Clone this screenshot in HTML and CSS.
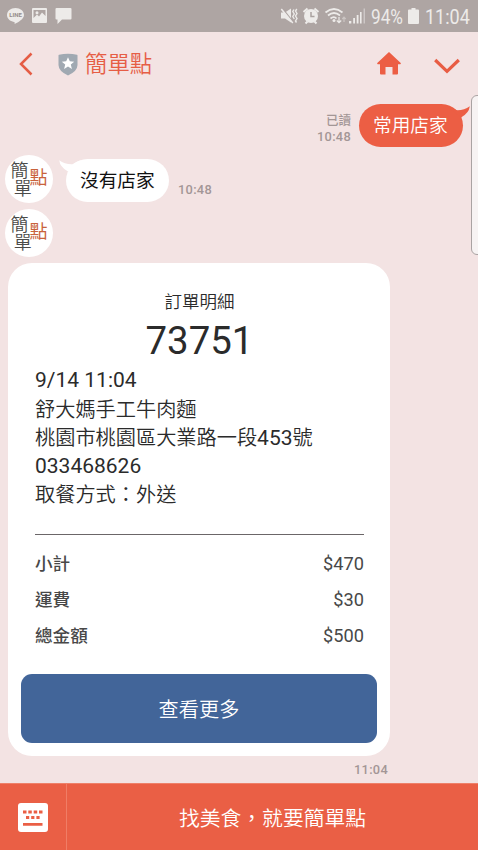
FILE: index.html
```html
<!DOCTYPE html>
<html lang="zh-Hant">
<head>
<meta charset="utf-8">
<meta name="viewport" content="width=device-width, initial-scale=1">
<title>簡單點</title>
<link rel="stylesheet" href="styles.css">
</head>
<body>
<div class="app">
  <div class="status">
    <svg class="status-left" width="80" height="32" viewBox="0 0 80 32" fill="#edebe9">
      <path d="M15.500 8C10.600 8 7 11.100 7 15.100c0 3.500 3 6.300 7 6.900 1 .2.700.9.600 2.100 3.700-1.700 9.400-5 9.400-9C24 11.100 20.400 8 15.500 8z"/>
      <text class="line-mark" x="15.600" y="17.200" text-anchor="middle" fill="#958d8b">LINE</text>
      <path fill-rule="evenodd" d="M33 8h13q1 0 1 1v13q0 1-1 1H33q-1 0-1-1V9q0-1 1-1zM33.500 10v8l3.500-3.500 2 2 3-4 1.500 1.500 2 2V10zM37 11.300a1.500 1.500 0 1 0 0 3 1.500 1.500 0 0 0 0-3z"/>
      <path d="M56.500 8h14q1 0 1 1v9.500q0 1-1 1H62L57.500 24v-4.500h-1q-1 0-1-1V9q0-1 1-1z"/>
    </svg>
    <div class="status-right">
      <svg width="90" height="32" viewBox="280 0 90 32" fill="#edebe9">
        <path d="M281 12.500h4l6-4v14l-6-4h-4z"/>
        <path d="M282.500 8.500l11 14" stroke="#aea5a3" stroke-width="1.300"/>
        <path d="M281.300 9l11.500 14" stroke="#edebe9" stroke-width="1.500"/>
        <path d="M294 9.500l-1.200 2 1.500 2.500-1.500 2.500 1.500 2.500M296.800 9l-1.300 2 1.500 2.500-1.500 2.500 1.500 2.500-1.500 2.500 1 1.500" fill="none" stroke="#edebe9" stroke-width="1.400"/>
        <circle cx="311" cy="16" r="7"/>
        <path d="M303.500 12l4-3.500M318.500 12l-4-3.500M305.500 23.500l2-2M316.500 23.500l-2-2" stroke="#edebe9" stroke-width="2"/>
        <path d="M311 12v4.500h3.500" fill="none" stroke="#aaa2a0" stroke-width="1.500"/>
        <path d="M325.500 12.500q8.500-7 17 0M328 15.500q6-5 12 0M330.500 18.500q3.500-2.800 6 0" fill="none" stroke="#edebe9" stroke-width="1.700"/>
        <circle cx="334" cy="20.500" r="1.500"/>
        <path d="M339 17v5.500M336.800 20.500l2.200 2.200 2.200-2.200" fill="none" stroke="#edebe9" stroke-width="1.200"/>
        <path d="M344 22v-4.500M342.300 19l1.700-1.800 1.700 1.800" fill="none" stroke="#cbc5c3" stroke-width="1.200"/>
        <path d="M349 21h2.300v2.500H349zM353.200 18h1.800v5.500h-1.800zM356.700 15h1.800v8.500h-1.800zM360 12h1.600v11.500H360z"/>
        <path d="M363.600 8.500h1.300v15h-1.300z" opacity=".55"/>
      </svg>
      <span class="battery-pct">94%</span>
      <svg width="11" height="32" viewBox="0 0 11 32" fill="#edebe9"><path d="M3.500 8h4v1.500H10q1 0 1 1V23q0 1-1 1H1q-1 0-1-1V10.500q0-1 1-1h2.500z"/></svg>
      <span class="clock">11:04</span>
    </div>
  </div>

  <header class="header">
    <svg class="back" width="14" height="24" viewBox="0 0 14 24"><path d="M12.500 1.500L2 12l10.500 10.500" fill="none" stroke="#e55d45" stroke-width="2.500"/></svg>
    <svg class="shield" width="20" height="23" viewBox="0 0 20 23"><path d="M1 1.800Q10-.4 19 1.800q.5.200.5 1V12q0 6-9.500 10.500Q.500 18 .5 12V2.800q0-.8.5-1z" fill="#a0a9b2"/><path d="M10 4.200l1.800 4.100 4.400.35-3.400 2.900 1.100 4.400L10 13.600l-3.900 2.350 1.100-4.400-3.400-2.900 4.400-.35z" fill="#fff"/></svg>
    <h1 class="title">簡單點</h1>
    <svg class="home" width="24" height="23" viewBox="0 0 24 23"><path d="M12 0l12 11.300-.7.900H21v9.300q0 1-1 1h-4.500V15h-7v7.500H4q-1 0-1-1v-9.300H.7L0 11.300z" fill="#ec5e44"/></svg>
    <svg class="chevron" width="26" height="16" viewBox="0 0 26 16"><path d="M1.200 2L13 13.300 24.800 2" fill="none" stroke="#e85d44" stroke-width="3.200"/></svg>
  </header>

  <main class="chat">
    <div class="row sent">
      <div class="meta"><span>已讀</span><span>10:48</span></div>
      <div class="bubble bubble-sent">常用店家
        <svg class="tail tail-right" width="24" height="15" viewBox="0 0 24 15"><path d="M0 1Q5 2 9.500 5.200 17 5.500 22.800 1.200 22 8 14 12.500z" fill="#ec5e44"/></svg>
      </div>
    </div>
    <div class="row received">
      <svg class="avatar" viewBox="0 0 48 48"><circle cx="24" cy="24" r="24" fill="#fff"/><g class="avatar-text" fill="#4b4b49"><text x="5.500" y="22.300">簡</text><text x="8.800" y="40">單</text><text x="24.500" y="29">點</text></g></svg>
      <div class="bubble bubble-received">沒有店家
        <svg class="tail tail-left" width="24" height="15" viewBox="0 0 24 15"><path d="M24 1Q19 2 14.500 5.200 7 5.500 1.200 1.200 2 8 10 12.500z" fill="#fff"/></svg>
      </div>
      <span class="time">10:48</span>
    </div>
    <svg class="avatar" viewBox="0 0 48 48"><circle cx="24" cy="24" r="24" fill="#fff"/><g class="avatar-text" fill="#4b4b49"><text x="5.500" y="22.300">簡</text><text x="8.800" y="40">單</text><text x="24.500" y="29">點</text></g></svg>
    <section class="card">
      <div class="card-body">
        <h2 class="card-title">訂單明細</h2>
        <div class="order-no">73751</div>
        <div class="details">
          <p><span class="num">9/14 11:04</span></p>
          <p class="zh">舒大媽手工牛肉麵</p>
          <p class="zh">桃園市桃園區大業路一段<span class="num">453</span>號</p>
          <p><span class="num">033468626</span></p>
          <p class="zh">取餐方式：外送</p>
        </div>
        <dl class="totals">
          <div><dt>小計</dt><dd>$470</dd></div>
          <div><dt>運費</dt><dd>$30</dd></div>
          <div><dt>總金額</dt><dd>$500</dd></div>
        </dl>
      </div>
      <button class="more">查看更多</button>
    </section>
    <div class="card-time">11:04</div>
    <div class="edge-panel"></div>
  </main>

  <footer class="footer">
    <div class="keyboard">
      <svg width="30" height="29" viewBox="0 0 30 29"><rect width="30" height="29" rx="3" fill="#fff"/><path d="M5 7.500h3.500v3H5zM10.300 7.500h3.500v3h-3.500zM15.700 7.500h3.500v3h-3.500zM21 7.500h3.500v3H21zM8 13h3.200v3H8zM13.200 13h3.200v3h-3.200zM18.400 13h3.200v3h-3.200zM5 20h19.500v2.800H5z" fill="#ea5f45"/></svg>
    </div>
    <div class="footer-text">找美食，就要簡單點</div>
  </footer>
</div>
</body>
</html>
```

FILE: styles.css
```css
* {
  box-sizing: border-box;
  margin: 0;
  padding: 0;
}

body {
  font-family: Roboto, "Noto Sans CJK TC", sans-serif;
  font-weight: 350;
  background: #f3e3e3;
  overflow: hidden;
}

svg {
  display: block;
  flex: none;
}

.app {
  width: 478px;
  height: 850px;
  display: flex;
  flex-direction: column;
}

.status {
  height: 32px;
  flex: none;
  background: #aea5a3;
  color: #edebe9;
  display: flex;
  justify-content: space-between;
}

.line-mark {
  font: 700 6px Roboto, sans-serif;
}

.status-right {
  display: flex;
  width: 198px;
}

.battery-pct,
.clock {
  font-size: 20px;
  font-weight: 400;
  line-height: 34px;
  transform-origin: left center;
  white-space: nowrap;
}

.battery-pct {
  width: 32px;
  margin: 0 5px 0 1px;
  transform: scaleX(.86);
}

.clock {
  margin-left: 6px;
  transform: scaleX(.9);
}

.header {
  height: 64px;
  flex: none;
  display: flex;
  align-items: center;
}

.back {
  margin-left: 19px;
}

.shield {
  margin-left: 25px;
}

.title {
  font-size: 22.4px;
  font-weight: 350;
  line-height: 32px;
  color: #e65d45;
  margin-left: 7px;
  flex: 1;
}

.home {
  margin: -1px 33px 0 0;
}

.chevron {
  margin: 4px 18px 0 0;
}

.chat {
  position: relative;
  height: 687px;
  flex: none;
}

.row {
  display: flex;
}

.sent {
  height: 59px;
  justify-content: flex-end;
  padding: 8px 15px 0 0;
}

.meta {
  display: flex;
  flex-direction: column;
  align-items: flex-end;
  padding-top: 9px;
  margin-right: 8px;
  font-size: 12.5px;
  line-height: 16px;
  font-weight: 500;
  color: #a39696;
}

.meta span + span,
.time,
.card-time {
  font-size: 12.8px;
  font-weight: 500;
  letter-spacing: .3px;
  color: #a39696;
}

.bubble {
  position: relative;
  height: 43px;
  border-radius: 22px;
  font-size: 18.7px;
  line-height: 45px;
  white-space: nowrap;
}

.bubble-sent {
  width: 104px;
  padding-left: 14px;
  background: #ec5e44;
  color: #fff;
}

.bubble-received {
  width: 103px;
  padding-left: 14px;
  margin: 4px 0 0 13px;
  background: #fff;
  color: #111;
  font-weight: 400;
}

.tail {
  position: absolute;
}

.tail-right {
  right: -8px;
  top: 1px;
}

.tail-left {
  left: -8px;
  top: 0;
}

.avatar {
  width: 48px;
  height: 48px;
  margin-left: 5px;
}

.avatar-text {
  font-size: 18px;
  font-family: "Noto Sans CJK TC", sans-serif;
}

.avatar-text text:last-child {
  fill: #c9633c;
  font-weight: 400;
}

.received {
  height: 54px;
}

.time {
  margin: 26px 0 0 9px;
  line-height: 18px;
}

.card {
  width: 382px;
  height: 493px;
  margin: 6px 0 0 8px;
  padding: 25px 13px 13px;
  border-radius: 24px;
  background: #fff;
  display: flex;
  flex-direction: column;
}

.card-body {
  flex: 1;
  padding: 0 13px 0 14px;
  color: #2b2b2b;
}

.card-title {
  font-size: 17.5px;
  font-weight: 350;
  line-height: 28px;
  text-align: center;
}

.order-no {
  font-size: 38.4px;
  font-weight: 400;
  line-height: 50px;
  text-align: center;
}

.details {
  font-size: 20.2px;
  line-height: 28.6px;
  height: 169px;
  border-bottom: 1px solid #6b6668;
  white-space: nowrap;
}

.details p {
  height: 28.6px;
}

.details .zh {
  line-height: 30.6px;
}

.num {
  font-size: 21px;
  font-weight: 400;
}

.totals {
  padding-top: 11px;
  color: #484848;
}

.totals div {
  height: 36px;
  line-height: 36px;
  display: flex;
  justify-content: space-between;
}

.totals dt {
  font-size: 17.6px;
  font-weight: 500;
}

.totals dd {
  font-size: 18.2px;
  font-weight: 400;
}

.more {
  height: 69px;
  border: 0;
  border-radius: 11px;
  background: #426599;
  color: #fff;
  font: inherit;
  font-size: 20.2px;
}

.card-time {
  width: 388px;
  text-align: right;
  margin-top: 5px;
  line-height: 18px;
}

.edge-panel {
  position: absolute;
  right: -6px;
  top: -1px;
  width: 13px;
  height: 160px;
  border: 1px solid #aaa3a3;
  border-radius: 6px;
  background: #f7f3f3;
}

.footer {
  height: 67px;
  flex: none;
  display: flex;
  background: #ea5f45;
  border-top: 1px solid #ee8069;
}

.keyboard {
  width: 67px;
  border-right: 1px solid #f07d66;
  padding: 19px 0 0 18px;
}

.footer-text {
  flex: 1;
  text-align: center;
  font-size: 20.8px;
  line-height: 70px;
  color: #fff;
}
```
